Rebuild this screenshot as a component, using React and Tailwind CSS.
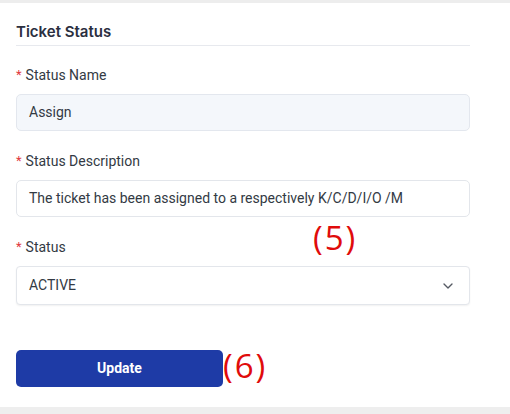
import React from "react";
import { ChevronDown } from "lucide-react";

function Label({ children }) {
  return (
    <div className="flex items-center text-[14px] leading-[20px] text-[#333a44] mb-[9px]">
      <span className="text-[#e0393e] mr-[4px] text-[13px]">*</span>
      {children}
    </div>
  );
}

export default function App() {
  return (
    <div
      className="w-[510px] h-[414px] bg-white flex flex-col relative overflow-hidden"
      style={{ fontFamily: "Roboto, 'Liberation Sans', sans-serif" }}
    >
      <div className="h-[3px] bg-[#ededed] shrink-0" />
      <div className="flex-1 pl-4 pr-[40px] pt-[19px]">
        <div className="border-b border-[#e7e9ee] pb-[3px]">
          <h2 className="text-[15px] leading-[20px] font-semibold text-[#2b2f3f]" style={{ fontFamily: "Inter, Roboto, sans-serif" }}>
            Ticket Status
          </h2>
        </div>

        <div className="mt-[19px]">
          <Label>Status Name</Label>
          <div className="h-[37px] rounded-[5px] border border-[#e3e7ee] bg-[#f4f7fb] flex items-center px-[12px] text-[14px] text-[#333a44]">
            Assign
          </div>
        </div>

        <div className="mt-[20px]">
          <Label>Status Description</Label>
          <div className="h-[37px] rounded-[5px] border border-[#e3e6eb] bg-white flex items-center px-[12px] text-[14px] text-[#333a44]">
            The ticket has been assigned to a respectively K/C/D/I/O /M
          </div>
        </div>

        <div className="mt-[20px]">
          <Label>Status</Label>
          <div className="h-[39px] rounded-[4px] border border-[#e3e6eb] bg-white flex items-center justify-between pl-[12px] pr-[13px] text-[14px] text-[#333a44] shadow-[0_1px_2px_rgba(0,0,0,0.06)]">
            <span>ACTIVE</span>
            <ChevronDown size={16} strokeWidth={2} className="text-[#555a63]" />
          </div>
        </div>

        <div className="mt-[45px]">
          <button className="w-[207px] h-[37px] rounded-[5px] bg-[#1e3ba6] text-white text-[14px] font-bold">
            Update
          </button>
        </div>
      </div>
      <div className="h-[7px] bg-[#eeeeee] shrink-0" />

      <div
        className="absolute left-[313px] top-[217px] text-[33px] leading-[42px] tracking-[2px] text-[#e00b0b]"
        style={{ fontFamily: "'Open Sans', Lato, sans-serif" }}
      >
        (5)
      </div>
      <div
        className="absolute left-[223px] top-[345px] text-[33px] leading-[42px] tracking-[2px] text-[#e00b0b]"
        style={{ fontFamily: "'Open Sans', Lato, sans-serif" }}
      >
        (6)
      </div>
    </div>
  );
}
